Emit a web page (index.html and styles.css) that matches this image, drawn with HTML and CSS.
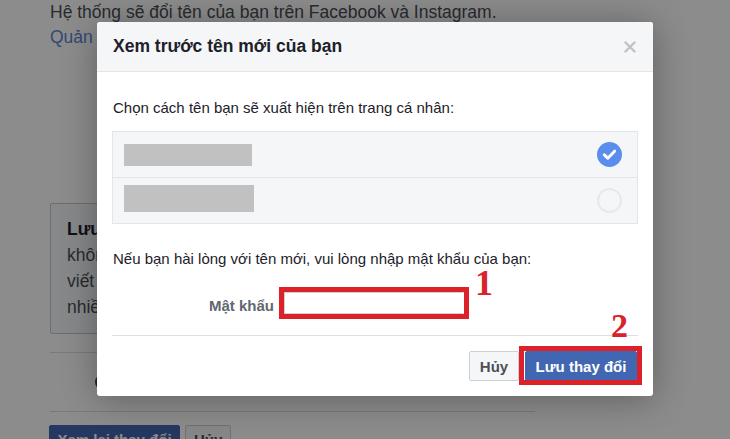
FILE: index.html
```html
<!DOCTYPE html>
<html lang="vi">
<head>
    <meta charset="UTF-8" />
    <meta name="viewport" content="width=device-width, initial-scale=1.0">
    <title>Cài đặt tên</title>
    <link rel="stylesheet" href="styles.css">
</head>
<body>
    <div class="page">
        <p class="intro">
            Hệ thống sẽ đổi tên của bạn trên Facebook và Instagram.<br>
            <a href="#" class="link">Quản lý tên trên Instagram</a>
        </p>

        <div class="note">
            <b>Lưu ý:</b> Nếu thay đổi tên trên Facebook, bạn sẽ<br>
            không thể đổi lại tên trong 60 ngày. Đừng thêm bất kỳ cách<br>
            viết hoa, dấu câu, ký tự bất thường hay từ ngẫu nhiên nào<br>
            nhiều lần vào tên của bạn.
        </div>

        <div class="section">
            <span class="radio"></span>
            <span>Tên khác</span>
        </div>

        <div class="actions">
            <button class="btn btn-primary">Xem lại thay đổi</button>
            <button class="btn">Hủy</button>
        </div>
    </div>

    <div class="overlay"></div>

    <div class="dialog">
        <div class="dialog-head">
            <span class="dialog-title">Xem trước tên mới của bạn</span>
            <svg class="close" width="12" height="12" viewBox="0 0 12 12">
                <path d="M1.5 1.5 L10.5 10.5 M10.5 1.5 L1.5 10.5" stroke="#bec2c9" stroke-width="2.4" stroke-linecap="round"/>
            </svg>
        </div>

        <div class="dialog-body">
            <p class="hint">Chọn cách tên bạn sẽ xuất hiện trên trang cá nhân:</p>

            <ul class="choices">
                <li class="choice">
                    <span class="name-blur"></span>
                    <span class="pick is-on">
                        <svg width="25" height="25" viewBox="0 0 25 25">
                            <circle cx="12.5" cy="12.5" r="12.5" fill="#5a8dee"/>
                            <path d="M7.3 12.8 L10.8 16.2 L17.6 9.2" fill="none" stroke="#fff" stroke-width="3" stroke-linecap="round" stroke-linejoin="round"/>
                        </svg>
                    </span>
                </li>
                <li class="choice">
                    <span class="name-blur name-blur-tall"></span>
                    <span class="pick"></span>
                </li>
            </ul>

            <p class="hint hint-pass">Nếu bạn hài lòng với tên mới, vui lòng nhập mật khẩu của bạn:</p>

            <div class="pass-row">
                <label class="pass-label" for="pass">Mật khẩu</label>
                <span class="mark">
                    <input class="pass-input" id="pass" type="password">
                </span>
            </div>
        </div>

        <div class="dialog-foot">
            <button class="btn">Hủy</button>
            <span class="save-wrap">
                <button class="btn btn-primary">Lưu thay đổi</button>
                <span class="mark-frame"></span>
            </span>
        </div>

        <!-- số thứ tự các bước -->
        <span class="step step-1">1</span>
        <span class="step step-2">2</span>
    </div>
</body>
</html>
```

FILE: styles.css
```css
body {
    margin: 0;
    width: 730px;
    height: 439px;
    overflow: hidden;
    position: relative;
    background-color: #fff;
    font-family: "Liberation Sans", Arial, sans-serif;
    color: #1d2129;
}

/* trang cài đặt phía sau */
.page {
    width: 485px;
    padding-left: 50px;
}

.intro {
    margin: 0;
    font-size: 17.5px;
    line-height: 25px;
    color: #4b4f56;
    white-space: nowrap;
}

.link {
    color: #5b87d6;
    text-decoration: none;
}

.note {
    margin-top: 153px;
    height: 117px;
    padding: 12px 16px 0;
    border: 1px solid #c4c8ce;
    border-radius: 2px;
    background-color: #f6f7f9;
    font-size: 17.5px;
    line-height: 26px;
    color: #4b4f56;
    white-space: nowrap;
    overflow: hidden;
}

.note b {
    color: #1d2129;
}

.section {
    display: flex;
    align-items: center;
    gap: 8px;
    margin-top: 18px;
    height: 58px;
    padding-left: 45px;
    border-top: 1px solid #dddfe2;
    border-bottom: 1px solid #dddfe2;
    font-size: 15px;
}

.radio {
    width: 12px;
    height: 12px;
    border: 2px solid #444;
    border-radius: 50%;
}

.actions {
    display: flex;
    gap: 5px;
    margin-top: 13px;
    margin-left: -1px;
}

.btn {
    height: 30px;
    padding: 0 10px;
    border: 1px solid #ccd0d5;
    border-radius: 2px;
    background-color: #f5f6f7;
    color: #4b4f56;
    font-family: inherit;
    font-size: 15px;
    font-weight: bold;
    white-space: nowrap;
}

.btn-primary {
    background-color: #4267b2;
    border-color: #4267b2;
    color: #fff;
}

.actions .btn {
    height: 32px;
    padding: 0 8px 4px;
}

.actions .btn-primary {
    width: 131px;
    padding: 0 0 4px;
}

.overlay {
    position: absolute;
    inset: 0;
    background-color: rgba(0, 0, 0, 0.45);
}

/* hộp thoại xem trước */
.dialog {
    position: absolute;
    top: 22px;
    left: 97px;
    width: 556px;
    background-color: #fff;
    border-radius: 3px;
    box-shadow: 0 3px 36px rgba(0, 0, 0, 0.32);
}

.dialog-head {
    display: flex;
    align-items: center;
    justify-content: space-between;
    height: 49px;
    padding: 0 17px 0 16px;
    background-color: #f5f6f7;
    border-bottom: 1px solid #e5e5e5;
    border-radius: 3px 3px 0 0;
}

.dialog-title {
    font-size: 17.5px;
    font-weight: bold;
    color: #1d2129;
}

.dialog-body {
    margin: 0 15px;
    padding: 26px 0 16px;
    border-bottom: 1px solid #dddfe2;
}

.hint {
    margin: 0;
    padding-left: 1px;
    font-size: 15px;
    line-height: 20px;
    color: #1d2129;
}

.choices {
    list-style: none;
    margin: 13px 0 0;
    padding: 0;
    border: 1px solid #e4e6e9;
    background-color: #f5f6f7;
}

.choice {
    display: flex;
    align-items: center;
    justify-content: space-between;
    height: 45px;
    padding: 0 15px 0 11px;
}

.choice + .choice {
    border-top: 1px solid #e4e6e9;
}

.name-blur {
    width: 128px;
    height: 22px;
    background-color: #c1c1c1;
}

.name-blur-tall {
    width: 130px;
    height: 27px;
    margin-top: -4px;
}

.pick {
    width: 21px;
    height: 21px;
    border: 2px solid #e6e8eb;
    border-radius: 50%;
}

.pick.is-on {
    width: 25px;
    height: 25px;
    border: none;
}

.pick svg {
    display: block;
}

.hint-pass {
    margin-top: 25px;
}

.pass-row {
    display: flex;
    align-items: center;
    margin-top: 18px;
}

.pass-label {
    width: 162px;
    margin-right: 5px;
    padding-top: 4px;
    text-align: right;
    font-size: 15px;
    font-weight: bold;
    color: #606770;
}

.mark {
    border: 5px solid #dc2129;
}

.pass-input {
    display: block;
    box-sizing: border-box;
    width: 180px;
    height: 22px;
    margin: 0;
    border: 1px solid #ccd0d5;
    border-right-color: #fff;
    outline: none;
}

.dialog-foot {
    display: flex;
    justify-content: flex-end;
    gap: 6px;
    padding: 15px 16px 15px;
}

.dialog-foot .btn {
    width: 50px;
    padding: 0;
}

.dialog-foot .btn-primary {
    width: 112px;
}

.save-wrap {
    position: relative;
    display: flex;
}

.mark-frame {
    position: absolute;
    top: -5px;
    left: -6px;
    right: -5px;
    bottom: -4px;
    border: 5px solid #dc2129;
}

.step {
    position: absolute;
    font-family: "Liberation Serif", "Times New Roman", serif;
    font-weight: bold;
    color: #d9232b;
}

.step-1 {
    top: 243px;
    left: 378px;
    font-size: 36px;
    line-height: 36px;
}

.step-2 {
    top: 287px;
    left: 514px;
    font-size: 34px;
    line-height: 34px;
}
```
